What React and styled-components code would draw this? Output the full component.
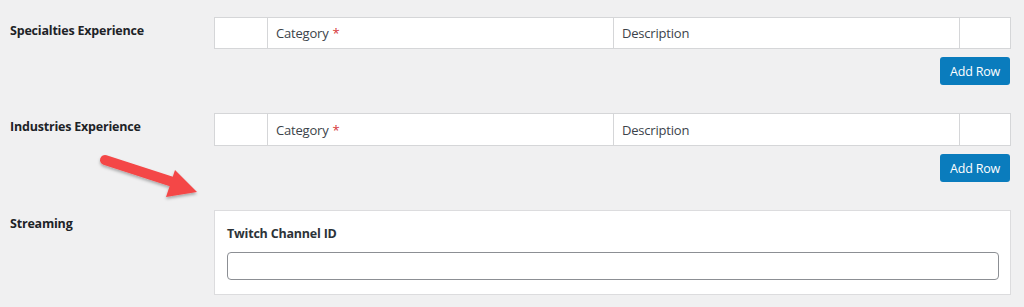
import React from "react";
import styled, { createGlobalStyle } from "styled-components";

const GlobalStyle = createGlobalStyle`
  html, body {
    margin: 0;
    padding: 0;
    background: #f0f0f1;
  }
  body {
    font-family: "Open Sans", "Noto Sans", sans-serif;
    color: #1d2327;
  }
`;

const Page = styled.div`
  position: relative;
  width: 1024px;
  height: 307px;
  padding-top: 17px;
  box-sizing: border-box;
  display: flex;
  flex-direction: column;
  gap: 28px;
`;

const FieldRow = styled.div`
  display: grid;
  grid-template-columns: 214px 797px;
`;

const FieldLabel = styled.div`
  padding: 5px 0 0 10px;
  font-size: 12.5px;
  line-height: 18px;
  font-weight: 700;
  letter-spacing: -0.2px;
  color: #1d2327;
`;

const FieldBody = styled.div`
  display: flex;
  flex-direction: column;
  align-items: flex-end;
  gap: 8px;
`;

const RepeaterTable = styled.div`
  width: 100%;
  box-sizing: border-box;
  display: grid;
  grid-template-columns: 52px 346px 346px 1fr;
  background: #fff;
  border: 1px solid #d5d6d8;
`;

const HeadCell = styled.div`
  height: ${(p) => p.$h}px;
  display: flex;
  align-items: center;
  padding: 0 8px;
  font-size: 13px;
  color: #3c434a;
  letter-spacing: -0.2px;
  border-left: ${(p) => (p.$first ? "none" : "1px solid #d5d6d8")};
`;

const Required = styled.span`
  color: #d63638;
  margin-left: 4px;
`;

const AddButton = styled.button`
  width: 70px;
  height: 28px;
  margin-right: 1px;
  border: none;
  border-radius: 3px;
  background: #0a7cbd;
  color: #fff;
  font-family: inherit;
  font-size: 12.5px;
  letter-spacing: -0.2px;
  padding: 0;
`;

const GroupBox = styled.div`
  width: 100%;
  box-sizing: border-box;
  background: #fff;
  border: 1px solid #dcdcde;
  padding: 14px 12px 14px 12px;
  display: flex;
  flex-direction: column;
  gap: 9px;
`;

const SubLabel = styled.div`
  font-size: 12.5px;
  line-height: 18px;
  font-weight: 700;
  letter-spacing: -0.2px;
  color: #2c3338;
`;

const TextInput = styled.input`
  width: 772px;
  height: 28px;
  box-sizing: border-box;
  border: 1px solid #8c8f94;
  border-radius: 4px;
  background: #fff;
`;

const ArrowLayer = styled.svg`
  position: absolute;
  left: 90px;
  top: 145px;
  overflow: visible;
`;

function RedArrow() {
  return (
    <ArrowLayer width="120" height="60" viewBox="0 0 120 60">
      <defs>
        <filter id="sh" x="-20%" y="-20%" width="140%" height="160%">
          <feDropShadow dx="0" dy="2" stdDeviation="1.5" floodColor="#000" floodOpacity="0.3" />
        </filter>
      </defs>
      <g filter="url(#sh)" fill="#f44747" stroke="none">
        <line x1="15" y1="15" x2="86" y2="38" stroke="#f44747" strokeWidth="10" strokeLinecap="round" />
        <polygon points="85,25 107,47 76,52" />
      </g>
    </ArrowLayer>
  );
}

function Repeater({ h }) {
  return (
    <RepeaterTable>
      <HeadCell $h={h} $first />
      <HeadCell $h={h}>
        Category<Required>*</Required>
      </HeadCell>
      <HeadCell $h={h}>Description</HeadCell>
      <HeadCell $h={h} />
    </RepeaterTable>
  );
}

export default function App() {
  return (
    <>
      <GlobalStyle />
      <Page>
        <FieldRow>
          <FieldLabel>Specialties Experience</FieldLabel>
          <FieldBody>
            <Repeater h={30} />
            <AddButton>Add Row</AddButton>
          </FieldBody>
        </FieldRow>
        <FieldRow>
          <FieldLabel>Industries Experience</FieldLabel>
          <FieldBody>
            <Repeater h={31} />
            <AddButton>Add Row</AddButton>
          </FieldBody>
        </FieldRow>
        <FieldRow>
          <FieldLabel>Streaming</FieldLabel>
          <FieldBody>
            <GroupBox>
              <SubLabel>Twitch Channel ID</SubLabel>
              <TextInput type="text" />
            </GroupBox>
          </FieldBody>
        </FieldRow>
        <RedArrow />
      </Page>
    </>
  );
}
